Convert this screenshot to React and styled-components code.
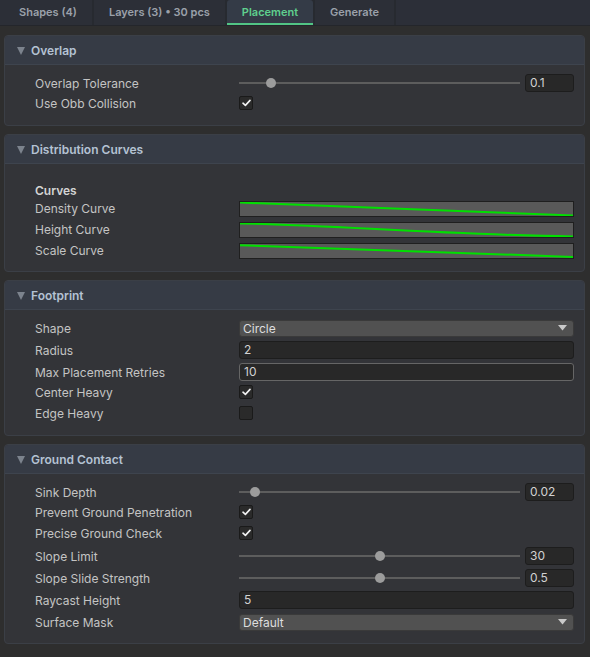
import React from 'react'
import styled, { createGlobalStyle } from 'styled-components'

const GlobalStyle = createGlobalStyle`
  html, body {
    margin: 0;
    padding: 0;
    background: #2e2e2e;
    font-family: Inter, "Noto Sans", sans-serif;
    font-size: 12px;
    color: #c6c6c6;
  }
`

const tabs = ['Shapes (4)', 'Layers (3) • 30 pcs', 'Placement', 'Generate']

const curves = {
  density: 'M0 0.4 C 35 3, 65 7, 100 9.6',
  height: 'M0 0.4 C 25 1, 60 8.4, 100 9.6',
  scale: 'M0 0.9 L100 9.2',
}

function Slider({ value, min, max }) {
  const pct = (value - min) / (max - min)
  return (
    <SliderRow>
      <Track>
        <Thumb style={{ left: `calc(${pct} * (100% - 10px))` }} />
      </Track>
      <NumberField>{value}</NumberField>
    </SliderRow>
  )
}

function Check({ checked }) {
  return (
    <CheckBox>
      {checked && (
        <svg width="9" height="8" viewBox="0 0 9 8">
          <path d="M1 4.2 L3.4 6.4 L8 1.4" fill="none" stroke="#f2f2f2" strokeWidth="1.6" strokeLinecap="round" strokeLinejoin="round" />
        </svg>
      )}
    </CheckBox>
  )
}

function Curve({ d }) {
  return (
    <CurveField>
      <svg width="100%" height="100%" viewBox="0 0 100 10" preserveAspectRatio="none">
        <path d={d} fill="none" stroke="#00e000" strokeWidth="2" vectorEffect="non-scaling-stroke" />
      </svg>
    </CurveField>
  )
}

function Dropdown({ value }) {
  return (
    <Select>
      <span>{value}</span>
      <svg width="9" height="6" viewBox="0 0 9 6">
        <path d="M0 0 L9 0 L4.5 5.5 Z" fill="#c9c9c9" />
      </svg>
    </Select>
  )
}

function Section({ title, children }) {
  return (
    <Panel>
      <PanelHeader>
        <Caret />
        {title}
      </PanelHeader>
      <PanelBody>{children}</PanelBody>
    </Panel>
  )
}

function Row({ label, kind = 'field', children }) {
  return (
    <FieldRow $kind={kind}>
      <Label>{label}</Label>
      <Control>{children}</Control>
    </FieldRow>
  )
}

export default function App() {
  return (
    <Page>
      <GlobalStyle />
      <TabBar>
        {tabs.map((t) => (
          <Tab key={t} $active={t === 'Placement'}>
            {t}
          </Tab>
        ))}
        <TabFill />
      </TabBar>

      <Panels>
        <Section title="Overlap">
          <Row label="Overlap Tolerance">
            <Slider value="0.1" min={0} max={1} />
          </Row>
          <Row label="Use Obb Collision" kind="check">
            <Check checked />
          </Row>
        </Section>

        <Section title="Distribution Curves">
          <Spacer />
          <GroupLabel>Curves</GroupLabel>
          <Row label="Density Curve" kind="curve">
            <Curve d={curves.density} />
          </Row>
          <Row label="Height Curve" kind="curve">
            <Curve d={curves.height} />
          </Row>
          <Row label="Scale Curve" kind="curve">
            <Curve d={curves.scale} />
          </Row>
        </Section>

        <Section title="Footprint">
          <Row label="Shape">
            <Dropdown value="Circle" />
          </Row>
          <Row label="Radius">
            <TextField>2</TextField>
          </Row>
          <Row label="Max Placement Retries">
            <TextField $focused>10</TextField>
          </Row>
          <Row label="Center Heavy" kind="check">
            <Check checked />
          </Row>
          <Row label="Edge Heavy" kind="check">
            <Check />
          </Row>
        </Section>

        <Section title="Ground Contact">
          <Row label="Sink Depth">
            <Slider value="0.02" min={0} max={0.5} />
          </Row>
          <Row label="Prevent Ground Penetration" kind="check">
            <Check checked />
          </Row>
          <Row label="Precise Ground Check" kind="check">
            <Check checked />
          </Row>
          <Row label="Slope Limit">
            <Slider value="30" min={0} max={60} />
          </Row>
          <Row label="Slope Slide Strength">
            <Slider value="0.5" min={0} max={1} />
          </Row>
          <Row label="Raycast Height">
            <TextField>5</TextField>
          </Row>
          <Row label="Surface Mask">
            <Dropdown value="Default" />
          </Row>
        </Section>
      </Panels>
    </Page>
  )
}

const Page = styled.div`
  width: 590px;
  min-height: 657px;
  background: #2e2e2e;
`

const TabBar = styled.div`
  display: flex;
  gap: 2px;
  height: 26px;
  background: #272a30;
  border-bottom: 1px solid #24262b;
  box-sizing: border-box;
`

const Tab = styled.div`
  display: flex;
  align-items: center;
  padding: 0 15px;
  font-size: 11px;
  font-weight: 600;
  color: ${(p) => (p.$active ? '#5fd08e' : '#9ba1aa')};
  background: ${(p) => (p.$active ? '#343b47' : '#2c2f37')};
  border-bottom: 2px solid ${(p) => (p.$active ? '#52c585' : 'transparent')};
  border-radius: ${(p) => (p.$active ? '3px 3px 0 0' : '0')};
  &:first-child {
    padding-left: 19px;
  }
`

const TabFill = styled.div`
  flex: 1;
  background: #2c2f38;
`

const Panels = styled.div`
  display: flex;
  flex-direction: column;
  gap: 8px;
  padding: 9px 5px 0 4px;
`

const Panel = styled.section`
  background: #333438;
  border: 1px solid #3b3f46;
  border-radius: 4px;
  overflow: hidden;
`

const PanelHeader = styled.div`
  display: flex;
  align-items: center;
  gap: 6px;
  height: 28px;
  padding-left: 12px;
  background: #363b45;
  border-bottom: 1px solid #3e444e;
  font-weight: 600;
  font-size: 12px;
  color: #b4c2d3;
`

const Caret = styled.span`
  width: 0;
  height: 0;
  border-left: 4.5px solid transparent;
  border-right: 4.5px solid transparent;
  border-top: 8px solid #7c838d;
  margin-top: 1px;
`

const PanelBody = styled.div`
  display: flex;
  flex-direction: column;
  padding: 7px 10px 10px 30px;
`

const rowHeights = { field: 22, check: 21, curve: 21 }

const FieldRow = styled.div`
  display: grid;
  grid-template-columns: 204px 1fr;
  align-items: center;
  box-sizing: border-box;
  height: ${(p) => rowHeights[p.$kind]}px;
  padding-bottom: ${(p) => (p.$kind === 'check' ? '3px' : '0')};
`

const Label = styled.div`
  color: #c4c4c4;
  white-space: nowrap;
`

const Control = styled.div`
  display: flex;
  align-items: center;
  min-width: 0;
`

const Spacer = styled.div`
  height: 9px;
`

const GroupLabel = styled.div`
  font-weight: 600;
  color: #d4d4d4;
  height: 18px;
  box-sizing: border-box;
  padding-top: 4px;
  line-height: 14px;
`

const SliderRow = styled.div`
  display: flex;
  align-items: center;
  gap: 5px;
  width: 100%;
`

const Track = styled.div`
  position: relative;
  flex: 1;
  height: 2px;
  background: #5d5d5d;
`

const Thumb = styled.div`
  position: absolute;
  top: -4px;
  width: 10px;
  height: 10px;
  border-radius: 50%;
  background: #9c9c9c;
`

const NumberField = styled.div`
  width: 49px;
  height: 18px;
  box-sizing: border-box;
  padding: 0 4px;
  line-height: 16px;
  background: #282828;
  border: 1px solid #1d1d1d;
  border-radius: 3px;
  color: #d2d2d2;
`

const TextField = styled.div`
  flex: 1;
  height: 18px;
  box-sizing: border-box;
  padding: 0 4px;
  line-height: 16px;
  background: #282828;
  border: 1px solid ${(p) => (p.$focused ? '#666666' : '#1d1d1d')};
  border-radius: 3px;
  color: #d2d2d2;
`

const Select = styled.div`
  flex: 1;
  display: flex;
  align-items: center;
  justify-content: space-between;
  height: 17px;
  box-sizing: border-box;
  padding: 0 6px 0 3px;
  background: #515151;
  border: 1px solid #3a3a3a;
  border-radius: 3px;
  color: #dedede;
`

const CheckBox = styled.div`
  display: flex;
  align-items: center;
  justify-content: center;
  width: 14px;
  height: 14px;
  box-sizing: border-box;
  background: #2a2a2a;
  border: 1px solid #1a1a1a;
  border-radius: 2px;
`

const CurveField = styled.div`
  flex: 1;
  height: 16px;
  box-sizing: border-box;
  background: #595959;
  border: 1px solid #1f1f1f;
  display: flex;
  svg {
    display: block;
  }
`
